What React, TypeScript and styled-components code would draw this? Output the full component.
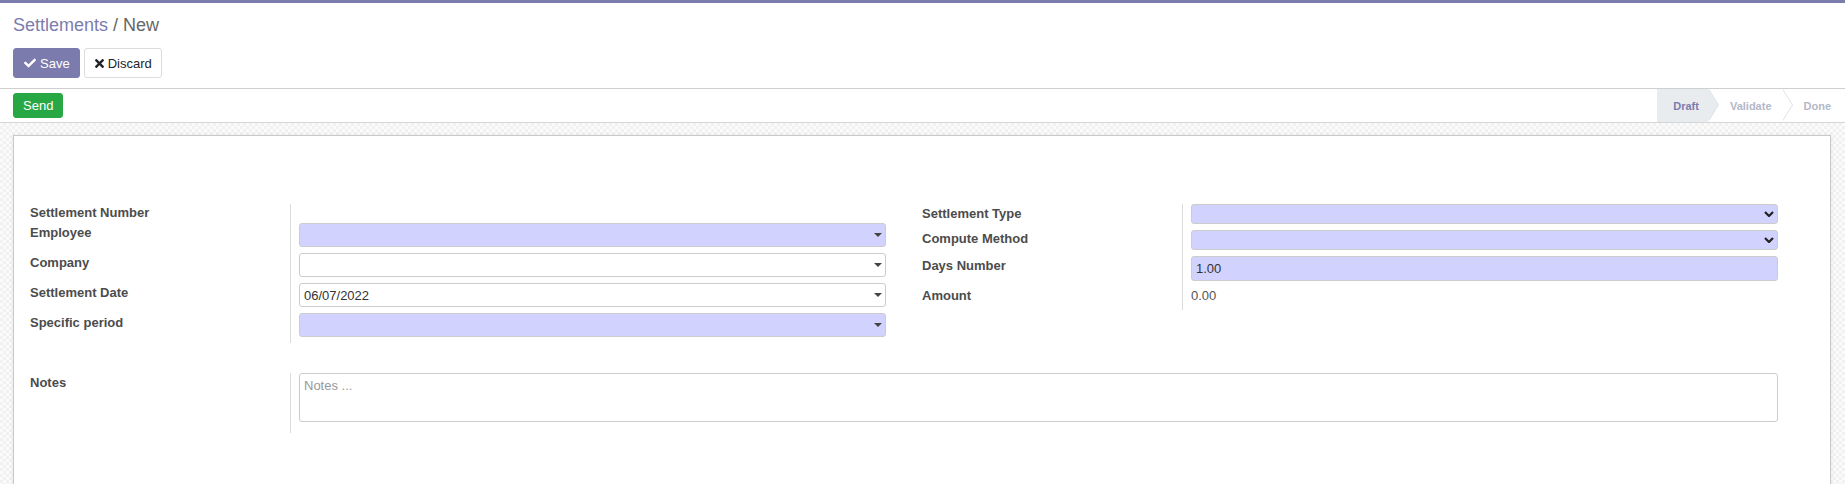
import React from "react";
import styled, { createGlobalStyle, css } from "styled-components";
import { FaCheck, FaTimes } from "react-icons/fa";

const Global = createGlobalStyle`
  html, body { margin: 0; padding: 0; }
  body {
    font-family: "Liberation Sans", Arial, sans-serif;
    font-size: 13px;
    color: #212529;
    background: #fff;
  }
  * { box-sizing: border-box; }
`;

const Page = styled.div`
  min-height: 100vh;
  display: flex;
  flex-direction: column;
`;

const TopBar = styled.div`
  height: 3px;
  background: #7c7bad;
`;

const ControlPanel = styled.div`
  padding: 9px 13px 10px 13px;
  display: flex;
  flex-direction: column;
  gap: 9px;
`;

const Breadcrumb = styled.div`
  font-size: 18px;
  line-height: 27px;
  color: #666;
`;

const Crumb = styled.span`
  color: #7c7bad;
`;

const ButtonRow = styled.div`
  display: flex;
  gap: 4px;
`;

const Button = styled.button<{ $variant: "primary" | "secondary" }>`
  height: 30px;
  display: inline-flex;
  align-items: center;
  gap: 4px;
  padding: 0 9px 0 10px;
  font-family: inherit;
  font-size: 13px;
  border-radius: 3px;
  cursor: pointer;
  ${(p) =>
    p.$variant === "primary"
      ? css`
          background: #7c7bad;
          border: 1px solid #7c7bad;
          color: #fff;
        `
      : css`
          background: #fff;
          border: 1px solid #dcdcdc;
          color: #212529;
        `}
`;

const CheckIcon = styled(FaCheck)`
  width: 12px;
  height: 12px;
`;

const TimesIcon = styled(FaTimes)`
  width: 9px;
  height: 13px;
`;

const StatusRow = styled.div`
  display: flex;
  justify-content: space-between;
  align-items: stretch;
  height: 35px;
  padding-left: 13px;
  border-top: 1px solid #cfcfcf;
  border-bottom: 1px solid #d6d6d6;
  background: #fff;
`;

const SendButton = styled.button`
  align-self: center;
  height: 25px;
  padding: 0 9px;
  font-family: inherit;
  font-size: 13px;
  color: #fff;
  background: #28a745;
  border: 1px solid #28a745;
  border-radius: 3px;
`;

const StatusBar = styled.div`
  display: flex;
  align-items: stretch;
`;

const StatusItem = styled.div<{ $active?: boolean; $first?: boolean; $last?: boolean }>`
  position: relative;
  display: flex;
  align-items: center;
  padding: 0 ${(p) => (p.$last ? 14 : p.$first ? 9 : 10)}px 0
    ${(p) => (p.$first ? 16 : 22)}px;
  background: ${(p) => (p.$active ? "#e9ecef" : "transparent")};
  color: ${(p) => (p.$active ? "#7c7bad" : "#b3b8c8")};
  font-size: 11px;
  font-weight: bold;
  ${(p) =>
    !p.$last &&
    css`
      &::before,
      &::after {
        content: "";
        position: absolute;
        top: 0;
        left: 100%;
        border-top: 16.5px solid transparent;
        border-bottom: 16.5px solid transparent;
      }
      &::before {
        margin-left: 1px;
        border-left: 10px solid #dee2e6;
        z-index: 1;
      }
      &::after {
        border-left: 10px solid ${p.$active ? "#e9ecef" : "#fff"};
        z-index: 2;
      }
    `}
`;

const Content = styled.div`
  flex: 1;
  padding: 12px 14px 0 13px;
  background-color: #fff;
  background-image: repeating-conic-gradient(#f1f1f1 0% 25%, #fbfbfb 0% 50%);
  background-size: 6px 6px;
  display: flex;
  flex-direction: column;
`;

const Sheet = styled.div`
  flex: 1;
  min-height: 360px;
  background: #fff;
  border: 1px solid #c9c9c9;
  box-shadow: 0 0 4px rgba(0, 0, 0, 0.08);
  padding: 68px 52px 40px 16px;
`;

const Groups = styled.div`
  display: grid;
  grid-template-columns: 1fr 1fr;
  gap: 36px;
  align-items: start;
`;

const Group = styled.div`
  display: flex;
  flex-direction: column;
`;

const FieldRow = styled.div`
  display: grid;
  grid-template-columns: 260px 1fr;
`;

const Label = styled.div<{ $top: number }>`
  padding-top: ${(p) => p.$top}px;
  font-weight: bold;
  font-size: 13px;
  line-height: 16px;
  color: #4c4c4c;
`;

const Value = styled.div<{ $top: number; $bottom: number; $minHeight?: number }>`
  border-left: 1px solid #dcdcdc;
  padding: ${(p) => p.$top}px 0 ${(p) => p.$bottom}px 8px;
  min-height: ${(p) => p.$minHeight ?? 0}px;
`;

const InputWrap = styled.div`
  position: relative;
`;

const TextInput = styled.div<{ $required?: boolean; $height: number }>`
  height: ${(p) => p.$height}px;
  display: flex;
  align-items: center;
  padding: 0 4px;
  border: 1px solid #cccccc;
  border-radius: 3px;
  background: ${(p) => (p.$required ? "#d2d2ff" : "#fff")};
  color: #333;
  font-size: 13px;
`;

const Caret = styled.span`
  position: absolute;
  right: 4px;
  top: 50%;
  margin-top: -2px;
  width: 0;
  height: 0;
  border-left: 4px solid transparent;
  border-right: 4px solid transparent;
  border-top: 4px solid #444;
`;

const Chevron = styled.svg`
  position: absolute;
  right: 4px;
  top: 50%;
  margin-top: -3px;
`;

const ReadValue = styled.div`
  padding-top: 4px;
  line-height: 16px;
  color: #555;
  font-size: 13px;
`;

const NotesRow = styled(FieldRow)`
  margin-top: 30px;
`;

const NotesArea = styled.div`
  height: 49px;
  border: 1px solid #cccccc;
  border-radius: 3px;
  padding: 4px;
  line-height: 16px;
  color: #999;
  font-size: 13px;
`;

function Many2one({ required, value }: { required?: boolean; value?: string }) {
  return (
    <InputWrap>
      <TextInput $required={required} $height={24}>
        {value}
      </TextInput>
      <Caret />
    </InputWrap>
  );
}

function Select() {
  return (
    <InputWrap>
      <TextInput $required $height={20} />
      <Chevron width="10" height="6" viewBox="0 0 10 6">
        <polyline points="1,1 5,5 9,1" fill="none" stroke="#222" strokeWidth="2.2" />
      </Chevron>
    </InputWrap>
  );
}

export default function App() {
  return (
    <Page>
      <Global />
      <TopBar />
      <ControlPanel>
        <Breadcrumb>
          <Crumb>Settlements</Crumb> / New
        </Breadcrumb>
        <ButtonRow>
          <Button $variant="primary">
            <CheckIcon />
            Save
          </Button>
          <Button $variant="secondary">
            <TimesIcon />
            Discard
          </Button>
        </ButtonRow>
      </ControlPanel>
      <StatusRow>
        <SendButton>Send</SendButton>
        <StatusBar>
          <StatusItem $active $first>
            Draft
          </StatusItem>
          <StatusItem>Validate</StatusItem>
          <StatusItem $last>Done</StatusItem>
        </StatusBar>
      </StatusRow>
      <Content>
        <Sheet>
          <Groups>
            <Group>
              <FieldRow>
                <Label $top={1}>Settlement Number</Label>
                <Value $top={0} $bottom={0} $minHeight={17} />
              </FieldRow>
              <FieldRow>
                <Label $top={4}>Employee</Label>
                <Value $top={2} $bottom={4}>
                  <Many2one required />
                </Value>
              </FieldRow>
              <FieldRow>
                <Label $top={4}>Company</Label>
                <Value $top={2} $bottom={4}>
                  <Many2one />
                </Value>
              </FieldRow>
              <FieldRow>
                <Label $top={4}>Settlement Date</Label>
                <Value $top={2} $bottom={4}>
                  <Many2one value="06/07/2022" />
                </Value>
              </FieldRow>
              <FieldRow>
                <Label $top={4}>Specific period</Label>
                <Value $top={2} $bottom={6}>
                  <Many2one required />
                </Value>
              </FieldRow>
            </Group>
            <Group>
              <FieldRow>
                <Label $top={2}>Settlement Type</Label>
                <Value $top={0} $bottom={3}>
                  <Select />
                </Value>
              </FieldRow>
              <FieldRow>
                <Label $top={4}>Compute Method</Label>
                <Value $top={3} $bottom={3}>
                  <Select />
                </Value>
              </FieldRow>
              <FieldRow>
                <Label $top={5}>Days Number</Label>
                <Value $top={3} $bottom={3}>
                  <TextInput $required $height={25}>
                    1.00
                  </TextInput>
                </Value>
              </FieldRow>
              <FieldRow>
                <Label $top={4}>Amount</Label>
                <Value $top={0} $bottom={6}>
                  <ReadValue>0.00</ReadValue>
                </Value>
              </FieldRow>
            </Group>
          </Groups>
          <NotesRow>
            <Label $top={2}>Notes</Label>
            <Value $top={0} $bottom={11}>
              <NotesArea>Notes ...</NotesArea>
            </Value>
          </NotesRow>
        </Sheet>
      </Content>
    </Page>
  );
}
